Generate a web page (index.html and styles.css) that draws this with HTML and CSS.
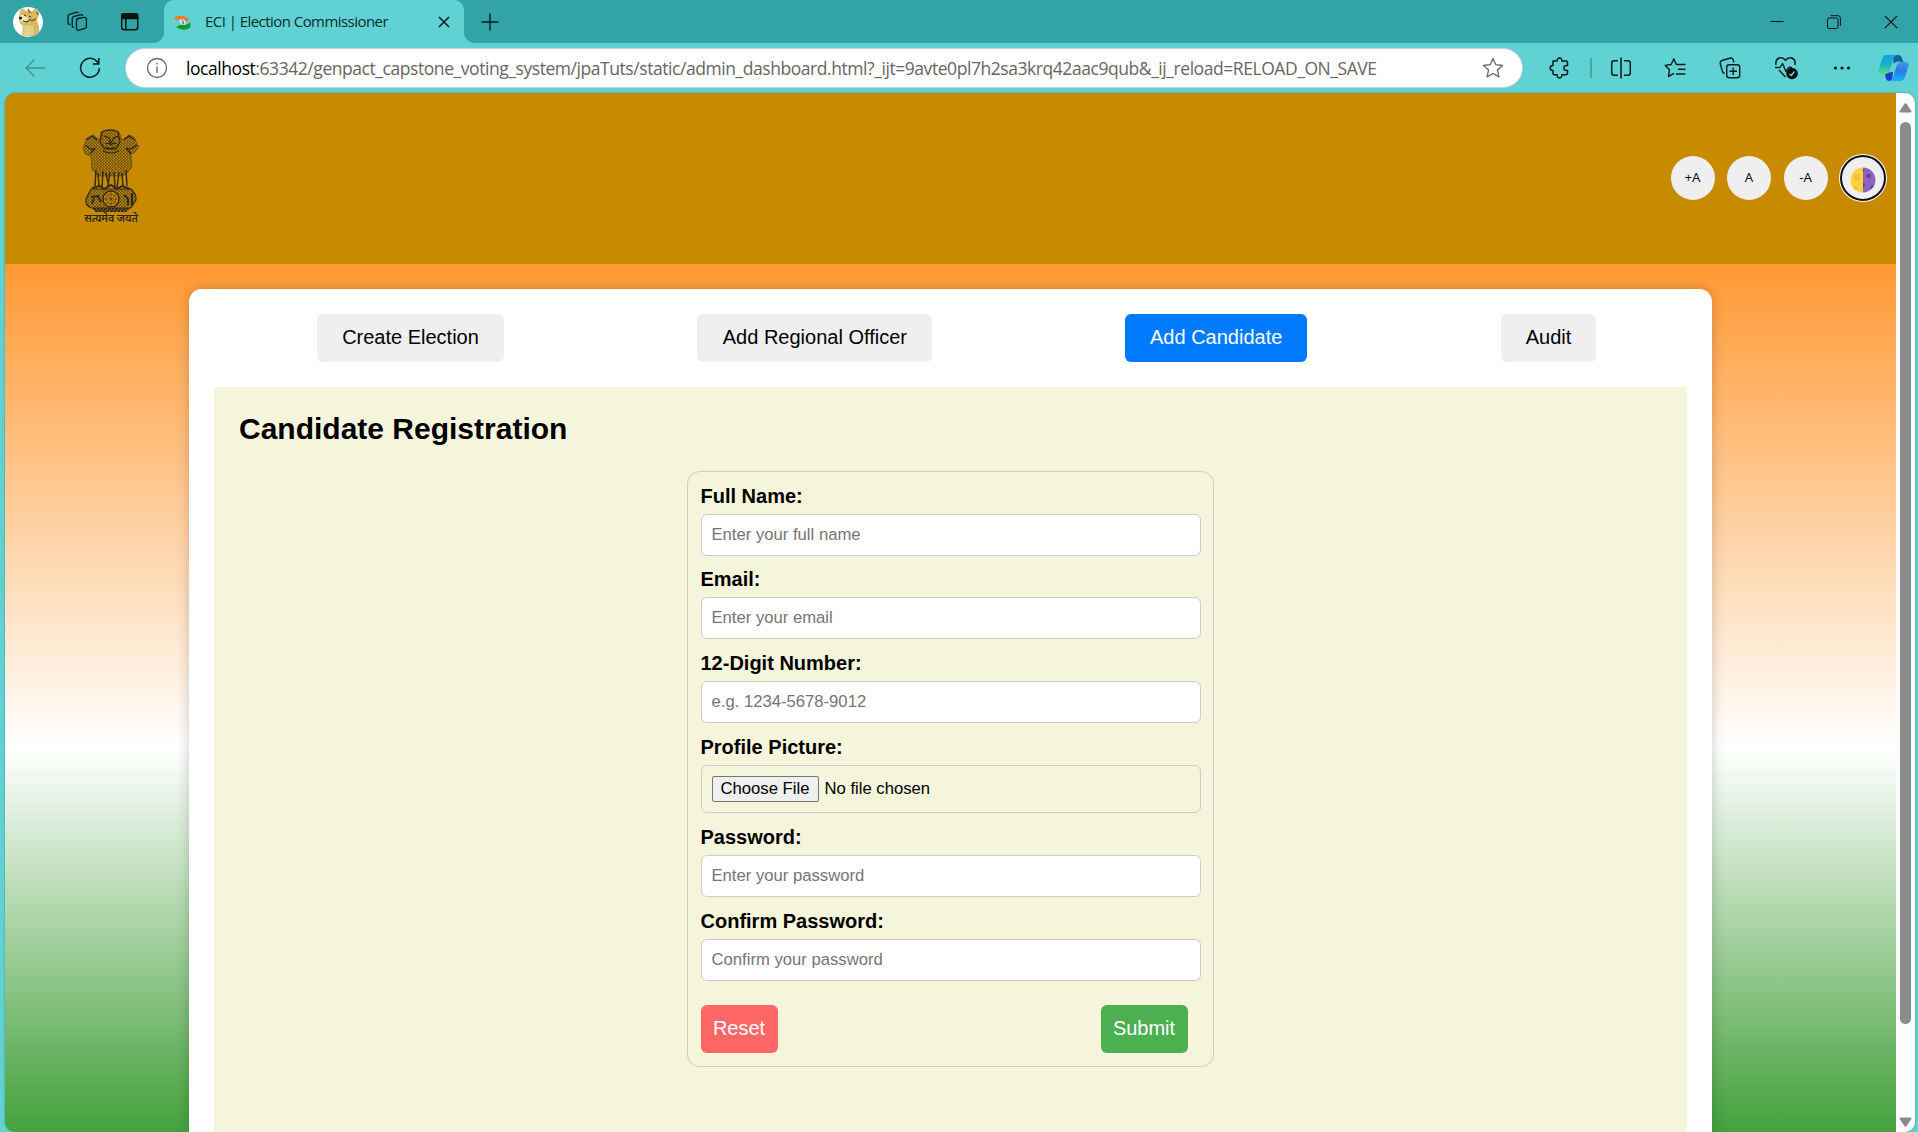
FILE: index.html
```html
<!DOCTYPE html>
<html lang="en">
<head>
<meta charset="utf-8">
<title>ECI | Election Commissioner</title>
<link rel="stylesheet" href="styles.css">
</head>
<body>
<div class="titlebar">
  <svg class="avatar" width="30" height="30" viewBox="0 0 30 30">
    <circle cx="15" cy="15" r="15" fill="#fdfdfb"/>
    <path d="M7 4l2-3 4 3h6l5-3 2 6-2 7 2 5v7q-5 4-12 3l-5-1 1-9q-5-3-4-10z" fill="#d6b964"/>
    <path d="M7 8l5 0 3 4-4 4-4-2z" fill="#f1e3b4"/>
    <path d="M12 18l8 1 1 9-8 1-3-2z" fill="#e5d089"/>
    <path d="M15 2l2 4M18 14l5-2M24 5l1 3" stroke="#9a5b1e" stroke-width="1.5" fill="none"/>
    <circle cx="7.5" cy="11" r="1.6" fill="#2b2419"/><path d="M11 8l2 1M16 9l2 1M10 14l4 1 4-3" stroke="#33291a" fill="none"/>
  </svg>
  <svg class="workspaces" width="22" height="22" viewBox="0 0 22 22" fill="none" stroke="#0c1c1d" stroke-width="1.3" stroke-linejoin="round">
    <path d="M9.500 9.200q.2-1.400 1.600-1.700l6.200-1.200q2-.2 2.100 1.800v7.300q0 1.400-1.400 1.900l-6.200 1.900q-2.100.4-2.300-1.600z"/>
    <path d="M7 16.500q-1.700-.1-1.800-1.700V7.500q0-1.500 1.400-1.900L14 3.700q1.500 0 1.900 1.300"/>
    <path d="M3.200 13.700Q1 13.500 1 11.600V5.400q0-1.700 1.400-2.100L9.700 1.200q1.200-.1 1.700.8"/>
  </svg>
  <svg class="tabactions" width="20" height="20" viewBox="0 0 20 20" fill="none" stroke="#0a1414" stroke-width="1.500">
    <rect x="1.700" y="1.700" width="16" height="16" rx="2.500"/><path d="M2 2.500h15.500v4H2z" fill="#0a1414"/><path d="M5.800 6v11.500"/>
  </svg>
  <div class="tab">
    <svg class="favicon" width="18" height="16" viewBox="0 0 18 16">
      <path d="M0 3Q4 0 8 1q4 0 7 4-1 2-4 1.500Q8 3.500 5 4.500 2 6.500 0 3z" fill="#f47a20"/>
      <path d="M5 5l4-1 3 2-1 4H7z" fill="#d8dceb"/><path d="M8.500 4l1.500 4-1.500 2z" fill="#3b50b0"/>
      <path d="M2 12q4-3 8-2 4 0 6-3Q18 12 14 14q-6 2-12-2z" fill="#159a26"/>
    </svg>
    <span class="tab-title">ECI | Election Commissioner</span>
    <svg class="tab-close" width="12" height="12" viewBox="0 0 12 12" stroke="#0c1c1d" stroke-width="1.500"><path d="M1 1l10 10M11 1L1 11"/></svg>
  </div>
  <svg class="newtab" width="18" height="18" viewBox="0 0 18 18" stroke="#0c1c1d" stroke-width="1.400"><path d="M9 .5v17M.5 9h17"/></svg>
  <div class="window-controls">
    <svg width="14" height="14" viewBox="0 0 14 14" stroke="#111" fill="none"><path d="M.5 6.500h13"/></svg>
    <svg width="14" height="14" viewBox="0 0 14 14" stroke="#111" fill="none"><rect x=".5" y="3" width="10.500" height="10.500" rx="1.500"/><path d="M3.500.7H11q2.400 0 2.400 2.400V11"/></svg>
    <svg width="14" height="14" viewBox="0 0 14 14" stroke="#111" fill="none" stroke-width="1.200"><path d="M.8.8l12.400 12.400M13.200.8L.8 13.200"/></svg>
  </div>
</div>

<div class="toolbar">
  <svg class="back" width="20" height="20" viewBox="0 0 20 20" fill="none" stroke="#3f8f92" stroke-width="1.300"><path d="M9.500 1.500L1 10l8.500 8.500M1 10h19"/></svg>
  <svg class="reload" width="22" height="22" viewBox="0 0 22 22" fill="none" stroke="#0c1c1d" stroke-width="1.500"><path d="M19.600 7A9.400 9.400 0 1 0 20.400 11M19.800 1v6h-6"/></svg>
  <div class="address">
    <svg width="22" height="22" viewBox="0 0 22 22" fill="none" stroke="#666" stroke-width="1.300"><circle cx="11" cy="11" r="9.500"/><path d="M11 9.500v6.500"/><circle cx="11" cy="6.700" r=".6" fill="#666" stroke-width=".6"/></svg>
    <span class="url"><b>localhost</b>:63342/genpact_capstone_voting_system/jpaTuts/static/admin_dashboard.html?_ijt=9avte0pl7h2sa3krq42aac9qub&amp;_ij_reload=RELOAD_ON_SAVE</span>
    <svg class="star" width="22" height="22" viewBox="0 0 22 22" fill="none" stroke="#666" stroke-width="1.300" stroke-linejoin="round"><path d="M11 1.500l2.800 6.200 6.700.8-5 4.600 1.400 6.800L11 16.500l-5.900 3.400 1.400-6.800-5-4.600 6.700-.8z"/></svg>
  </div>
  <div class="tools">
    <svg width="22" height="22" viewBox="0 0 22 22" fill="none" stroke="#0c1c1d" stroke-width="1.500" stroke-linejoin="round"><path d="M4 4h4.200q-.3-2.800 2.300-3 2.600.2 2.300 3H17q1.500 0 1.500 1.500V8.500q-3.500-.4-3.700 2.400.2 2.800 3.700 2.500V16q0 1.700-1.500 1.700h-4.200q.2 3.200-2.300 3.200T8.200 17.700H5.500Q4 17.700 4 16.200v-2.800Q1.200 13.400 1.200 11T4 8.600z"/></svg>
    <i class="divider"></i>
    <svg width="22" height="22" viewBox="0 0 22 22" fill="none" stroke="#0c1c1d" stroke-width="1.500"><path d="M11 .5v21M8 3.700H4q-2.300 0-2.300 2.300v10q0 2.300 2.300 2.300h4M14 3.700h4q2.300 0 2.300 2.300v10q0 2.300-2.300 2.300h-4"/></svg>
    <svg width="22" height="22" viewBox="0 0 22 22" fill="none" stroke="#0c1c1d" stroke-width="1.400" stroke-linejoin="round" stroke-linecap="round"><path d="M14 7.500h-1.700L9.800 1.800 7.200 7.500l-6 .9 4.300 4.300-1 6.900 5-3M14 7.500h7M14.500 12.300h6.500M12.500 17h8.500"/></svg>
    <svg width="22" height="22" viewBox="0 0 22 22" fill="none" stroke="#0c1c1d" stroke-width="1.400"><rect x="7.700" y="7.700" width="13" height="13" rx="2.500"/><path d="M14.200 10.500v7.500M10.500 14.200H18M5.500 16.500q-1.700-.5-2.200-2.500L1.200 6.500Q.8 4.300 3 3.500L11.500 1q2-.3 2.600 1.500l.9 3"/></svg>
    <svg width="24" height="24" viewBox="0 0 24 24" fill="none" stroke="#0c1c1d" stroke-width="1.400" stroke-linejoin="round"><path d="M2 9q-1-5 3-7 4-1 6.500 2.200Q14 1 18 2q4 2 3 7M1 11.500h5l2.500-4 3.500 8 2.500-4H18M5 14l6.500 7"/><circle cx="18" cy="17.500" r="5.800" fill="#080f10" stroke="none"/><path d="M15.500 18l1.800 1.500 3.200-4" stroke="#61d2d3"/></svg>
    <svg width="22" height="22" viewBox="0 0 22 22" fill="#0c1c1d"><circle cx="4.500" cy="11" r="1.600"/><circle cx="11" cy="11" r="1.600"/><circle cx="17.500" cy="11" r="1.600"/></svg>
  </div>
  <svg class="copilot" width="31" height="28" viewBox="0 0 31 28">
    <defs>
      <linearGradient id="ca" x1="0" y1="0" x2="0" y2="1"><stop offset="0" stop-color="#0fa6e6"/><stop offset=".5" stop-color="#18b0c6"/><stop offset="1" stop-color="#58dc85"/></linearGradient>
      <linearGradient id="cb" x1="0" y1="0" x2="0" y2="1"><stop offset="0" stop-color="#3f96ea"/><stop offset=".5" stop-color="#2a7ce6"/><stop offset="1" stop-color="#12b4fa"/></linearGradient>
    </defs>
    <path d="M15 1h5q3 0 4 3l1.500 4-6-.5-4 2z" fill="#15609f"/>
    <path d="M7 19l8-1-1 9h-3q-2.500 0-3.500-4z" fill="#1a3fd0"/>
    <path d="M8 1h11q-3 .5-4 5l-3 10q-1 4-5 4H3Q0 20 .7 16L4 5q1-4 4-4z" fill="url(#ca)"/>
    <path d="M24 8h3q4 0 3.500 4L27 23q-1 4-5 4H11q3-1 4.500-5l3-10q1-4 5.500-4z" fill="url(#cb)"/>
  </svg>
</div>

<div class="viewport">
  <div class="page">
    <header class="header">
      <div class="brand">
      <svg class="emblem" width="60" height="86" viewBox="0 0 60 86">
        <defs>
          <pattern id="mane" width="3" height="3" patternUnits="userSpaceOnUse"><path d="M0 .8q.75 1.400 1.500 0t1.500 0M0 2.300q.75-1.400 1.500 0t1.500 0" fill="none" stroke="#29281b" stroke-width=".7"/></pattern>
        </defs>
        <g fill="url(#mane)" stroke="#4a3f1b" stroke-width=".6">
          <path d="M20 4Q29-1 38 4l3 8 7-5q6 1 7 7l3 5-5 6-3 1 1 13-5 6-4 3H18l-7-6-1-14-6-2-2-6 4-10 6-3 7 5z"/>
        </g>
        <g fill="none" stroke="#29261a" stroke-width="1.200">
          <path d="M21 4q8-4 16 0l2 10-4 7H24l-5-7zM23 8l5 2 2 5 3-5 4-2M24 16l4-1 2 2 3-2 3 1M25 19q5 3 9 0M22 23q8 4 16 0M5 12l6-4 5 4M54 12l-6-4-5 4M4 17l5 4 6 0M56 17l-6 4-5-1M9 26l5-6M50 26l-5-6"/>
        </g>
        <g stroke="#302c1c" stroke-width="1.500" fill="none">
          <path d="M15 42l-1 16M17 45l1 14M22 43l-1 17M25 45l2 10M29 44l-2 14M33 44l1 15M38 44l-2 16M41 45l1 14M45 42l1 16"/>
          <path d="M11 60l8-2 4 3 7-4 6 4 5-3 8 3" stroke-width="2"/>
          <path d="M10 61h40q6 6 5 11l-5 8H10q-6-3-5-9z" stroke-width="1.200" fill="url(#mane)"/>
          <circle cx="30" cy="71" r="8" fill="#c88b00" stroke-width="1.500"/><circle cx="30" cy="71" r="5" stroke-width=".7"/>
          <path d="M30 64v14M23 71h14M25 66l10 10M35 66L25 76" stroke-width=".6"/>
          <path d="M10 69l7-1 3 6M11 76l2-6M43 67l4 4v6M51 65v12" stroke-width="2"/>
          <path d="M12 81h36M14 83h32" stroke-width="1.800" stroke-dasharray="3 .7"/>
        </g>
      </svg>
      <span class="motto">सत्यमेव जयते</span>
      </div>
      <div class="access">
        <button class="round">+A</button>
        <button class="round">A</button>
        <button class="round">-A</button>
        <button class="round focused">
          <svg width="26" height="26" viewBox="0 0 26 26"><path d="M13 .5a12.500 12.500 0 0 0 0 25z" fill="#ffd43b"/><path d="M13 .5a12.500 12.500 0 0 1 0 25z" fill="#8f63c5"/><g fill="#f8bd3c"><circle cx="7" cy="10" r="3.200"/><circle cx="5.500" cy="21" r="2"/><path d="M13 2a2 2 0 0 0 0 3z"/></g><g fill="#644092"><circle cx="18.500" cy="9" r="2.300"/><path d="M13 16a2 2 0 0 1 0 4zM13 2a1.500 1.500 0 0 1 0 3zM20 22q0-4 4-4-1 3-4 4z"/></g></svg>
        </button>
      </div>
    </header>
    <main class="container">
      <nav class="tabs">
        <button class="tab-btn w-create">Create Election</button>
        <button class="tab-btn w-officer">Add Regional Officer</button>
        <button class="tab-btn w-candidate active">Add Candidate</button>
        <button class="tab-btn w-audit">Audit</button>
      </nav>
      <section class="content">
        <h2>Candidate Registration</h2>
        <form class="form">
          <label>Full Name:</label>
          <input type="text" placeholder="Enter your full name">
          <label>Email:</label>
          <input type="email" placeholder="Enter your email">
          <label>12-Digit Number:</label>
          <input type="text" placeholder="e.g. 1234-5678-9012">
          <label>Profile Picture:</label>
          <div class="file"><span class="choose">Choose File</span><span>No file chosen</span></div>
          <label>Password:</label>
          <input type="password" placeholder="Enter your password">
          <label>Confirm Password:</label>
          <input type="password" placeholder="Confirm your password">
          <div class="actions">
            <button type="reset" class="reset">Reset</button>
            <button type="button" class="submit">Submit</button>
          </div>
        </form>
      </section>
    </main>
  </div>
  <div class="scrollbar">
    <svg width="13" height="10" viewBox="0 0 13 10"><path d="M5.300 1q1.200-1.500 2.400 0l4.600 7q.6 1.500-1 1.500H1.700Q0 9.500.7 8z" fill="#8b8b8b"/></svg>
    <i class="thumb"></i>
    <svg width="13" height="10" viewBox="0 0 13 10"><path d="M5.300 9q1.200 1.500 2.400 0l4.600-7q.6-1.500-1-1.500H1.700Q0 .5.700 2z" fill="#8b8b8b"/></svg>
  </div>
</div>
</body>
</html>
```
FILE: styles.css
```css
* { box-sizing: border-box; }
html, body { height: 100%; }
body {
  margin: 0;
  display: flex;
  flex-direction: column;
  overflow: hidden;
  background: #61d2d3;
  font-family: "Liberation Sans", Arial, sans-serif;
  color: #000;
}
svg { display: block; flex: none; }
button { border: 0; font-family: inherit; color: #000; padding: 0; }

/* Browser frame */
.titlebar {
  height: 43px;
  flex: none;
  display: flex;
  align-items: center;
  background: #32a4a7;
  padding: 0 20px 0 13px;
}
.avatar { margin-right: 24px; }
.workspaces { margin-right: 31px; }
.tabactions { margin-right: 24px; }
.tab {
  position: relative;
  width: 300px;
  height: 43px;
  display: flex;
  align-items: center;
  padding: 0 14px 0 10px;
  border-radius: 10px 10px 0 0;
  background: #61d2d3;
}
.tab::before, .tab::after {
  content: "";
  position: absolute;
  bottom: 0;
  width: 10px;
  height: 10px;
}
.tab::before { left: -10px; background: radial-gradient(circle at 0 0, #32a4a7 9.5px, #61d2d3 10px); }
.tab::after { right: -10px; background: radial-gradient(circle at 100% 0, #32a4a7 9.5px, #61d2d3 10px); }
.favicon { margin-top: 2px; }
.tab-title {
  margin: 0 0 2px 13px;
  font: 15px "Open Sans", sans-serif;
  letter-spacing: -0.55px;
  color: #0e2a2b;
  white-space: nowrap;
}
.tab-close { margin-left: auto; }
.newtab { margin-left: 17px; }
.window-controls { margin-left: auto; display: flex; gap: 43px; }

.toolbar {
  height: 50px;
  flex: none;
  display: flex;
  align-items: center;
  padding: 0 9px 0 25px;
}
.reload { margin: 0 24px 0 34px; }
.address {
  width: 1398px;
  height: 40px;
  display: flex;
  align-items: center;
  padding: 0 18px 0 20px;
  border: 1px solid #c7d0d0;
  border-radius: 20px;
  background: #fff;
}
.url {
  margin: 0 0 1px 18px;
  font: 17.5px "Open Sans", sans-serif;
  letter-spacing: -0.44px;
  color: #666;
  white-space: nowrap;
}
.url b { font-weight: 400; color: #000; }
.star { margin-left: auto; }
.tools { margin-left: 26px; display: flex; align-items: center; gap: 32.8px; }
.divider { width: 2px; height: 20px; background: #4aa5aa; margin: 0 -15px 0 -14px; }
.copilot { margin-left: auto; }

/* Page area */
.viewport {
  flex: 1;
  min-height: 0;
  margin: 0 3px 0 5px;
  display: flex;
  border-radius: 10px;
  overflow: hidden;
  box-shadow: 0 0 2px rgba(0, 0, 0, .4);
}
.page {
  flex: 1;
  display: flex;
  flex-direction: column;
  background: linear-gradient(#ff9933, #fff, #138808) 0 171px / 100% 968px no-repeat;
}
.header {
  height: 171px;
  flex: none;
  display: flex;
  justify-content: space-between;
  align-items: center;
  padding: 0 10px 2px 76px;
  background: #c88b00;
}
.brand {
  display: flex;
  flex-direction: column;
  align-items: center;
  width: 60px;
}
.motto {
  height: 16px;
  margin-top: -2px;
  font: 600 10.5px/16px "Noto Sans Devanagari", "Noto Sans", sans-serif;
  color: #292718;
  white-space: nowrap;
}
.access { display: flex; gap: 12.5px; }
.round {
  width: 44px;
  height: 44px;
  border-radius: 50%;
  background: #efefef;
  font: 13.3px "Open Sans", sans-serif;
  padding-bottom: 2px;
  display: flex;
  align-items: center;
  justify-content: center;
}
.focused { border: 2px solid #101010; box-shadow: 0 0 0 1px #fff; width: 46px; height: 46px; margin: -1px 0; padding: 0; }
.focused svg { margin-top: 4px; }
.container {
  flex: 1;
  margin: 25px 184px 0;
  padding: 25px 25px 0;
  display: flex;
  flex-direction: column;
  background: #fff;
  border-radius: 12.5px 12.5px 0 0;
  box-shadow: 0 0 12.5px rgba(0, 0, 0, .2);
}
.tabs {
  display: flex;
  justify-content: space-between;
  padding: 0 91px 0 103px;
}
.tab-btn {
  height: 48px;
  padding-bottom: 2px;
  border-radius: 6px;
  background: #efefef;
  font-size: 20px;
}
.w-create { width: 187px; }
.w-officer { width: 235px; }
.w-candidate { width: 182px; margin: 0 .5px 0 -.5px; }
.w-audit { width: 95px; }
.tab-btn.active { background: #007bff; color: #fff; }
.content {
  flex: 1;
  margin-top: 25px;
  padding: 25px;
  background: #f5f5dc;
}
h2 { margin: 0; font-size: 30px; line-height: 34px; }
.form {
  width: 527px;
  height: 596px;
  margin: 25px auto 0;
  padding: 11.6px 12.5px;
  border: 1px solid #ccc;
  border-radius: 12.5px;
}
label { display: block; height: 23px; margin-bottom: 7px; font-size: 20px; font-weight: 700; line-height: 24px; }
input, .file {
  display: block;
  width: 500px;
  height: 42px;
  margin-bottom: 11.75px;
  padding: 0 10px;
  border: 1px solid #ccc;
  border-radius: 6px;
  background: #fff;
  font: 16.67px "Liberation Sans", Arial, sans-serif;
}
input::placeholder { color: #757575; }
.file { height: 48.4px; display: flex; align-items: center; gap: 6px; background: none; }
.choose { height: 26px; width: 107px; line-height: 24px; text-align: center; border: 1px solid #767676; border-radius: 2px; background: #efefef; }
.actions { display: flex; justify-content: space-between; padding: 13px 13px 0 0; }
.actions button { height: 48px; padding-bottom: 1px; border-radius: 6px; font-size: 20px; color: #fff; }
.reset { width: 77px; background: #f66; }
.submit { width: 87px; background: #4caf50; }

.scrollbar {
  width: 19px;
  display: flex;
  flex-direction: column;
  align-items: center;
  padding: 10px 0 5px;
  background: #fcfcfc;
}
.scrollbar svg:last-child { margin-top: auto; }
.thumb { width: 11px; height: 902px; margin-top: 9px; border-radius: 6px; background: #8b8b8b; }
```
